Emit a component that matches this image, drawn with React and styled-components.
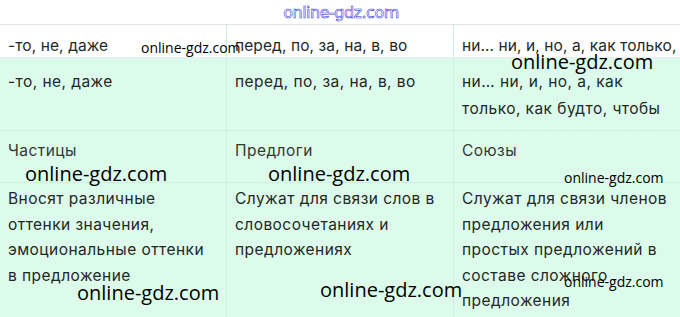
import React from "react";
import styled, { createGlobalStyle } from "styled-components";

const GlobalStyle = createGlobalStyle`
  html, body {
    margin: 0;
    padding: 0;
    background: #fff;
  }
  body {
    width: 680px;
    height: 317px;
    overflow: hidden;
  }
`;

const rows = [
  { bg: "#fff", pad: 9, line: 24, height: 32, tight: true, cells: ["-то, не, даже", "перед, по, за, на, в, во", "ни… ни, и, но, а, как только,"] },
  { bg: "#ddfbea", pad: 10, line: 27, height: 72, cells: ["-то, не, даже", "перед, по, за, на, в, во", "ни… ни, и, но, а, как\nтолько, как будто, чтобы"] },
  { bg: "#ddfbea", pad: 7, line: 26, height: 51, muted: true, cells: ["Частицы", "Предлоги", "Союзы"] },
  {
    bg: "#ddfbea", pad: 3, line: 25.5, height: 140, cells: [
      "Вносят различные\nоттенки значения,\nэмоциональные оттенки\nв предложение",
      "Служат для связи слов в\nсловосочетаниях и\nпредложениях",
      "Служат для связи членов\nпредложения или\nпростых предложений в\nсоставе сложного\nпредложения",
    ],
  },
];

const marks = [
  { x: 141, y: 40, size: 14 },
  { x: 511, y: 50, size: 20 },
  { x: 25, y: 162, size: 20 },
  { x: 268, y: 162, size: 20 },
  { x: 564, y: 170, size: 14 },
  { x: 77, y: 281, size: 20 },
  { x: 320, y: 278, size: 20 },
  { x: 564, y: 274, size: 14 },
];

const App = () => {
  return (
    <Page>
      <GlobalStyle />
      <Header>
        <Brand>online-gdz.com</Brand>
      </Header>
      <Table>
        {rows.map((row, i) => (
          <Row key={i} bg={row.bg} h={row.height} top={i === 0}>
            {row.cells.map((text, j) => (
              <Cell
                key={j}
                pad={row.pad}
                line={row.line}
                muted={row.muted}
                tight={row.tight}
                last={j === 2}
              >
                {text}
              </Cell>
            ))}
          </Row>
        ))}
      </Table>
      {marks.map((m, i) => (
        <Watermark key={i} size={m.size} style={{ left: m.x, top: m.y }}>
          online-gdz.com
        </Watermark>
      ))}
    </Page>
  );
};

const Page = styled.div`
  position: relative;
  width: 680px;
  height: 317px;
  overflow: hidden;
  background: #fff;
`;

const Header = styled.div`
  height: 24px;
  display: flex;
  justify-content: center;
  align-items: center;
  padding-left: 2px;
`;

const Brand = styled.span`
  font-family: "DejaVu Sans", sans-serif;
  font-size: 16px;
  letter-spacing: -0.5px;
  color: #fff;
  -webkit-text-stroke: 0.55px #3030d8;
`;

const Table = styled.div`
  display: flex;
  flex-direction: column;
  border-top: 1px solid #e4e4e4;
`;

const Row = styled.div`
  display: grid;
  grid-template-columns: 227px 227px 226px;
  height: ${p => p.h}px;
  background: ${p => p.bg};
  border-bottom: 1px solid ${p => (p.top ? "#e8ecea" : "#cfeedd")};
  overflow: hidden;
`;

const Cell = styled.div`
  padding: ${p => p.pad}px 0 0 8px;
  border-right: ${p => (p.last ? "none" : "1px solid #d2eee0")};
  font-family: "Inter", "DejaVu Sans", sans-serif;
  font-size: 15.5px;
  letter-spacing: ${p => (p.tight ? "0.1px" : "0.45px")};
  line-height: ${p => p.line}px;
  color: ${p => (p.muted ? "#333836" : "#1e2826")};
  white-space: pre;
  overflow: hidden;
`;

const Watermark = styled.span`
  position: absolute;
  font-family: "Open Sans", sans-serif;
  font-size: ${p => p.size}px;
  line-height: 1.2;
  color: #000;
  white-space: nowrap;
`;

export default App;
